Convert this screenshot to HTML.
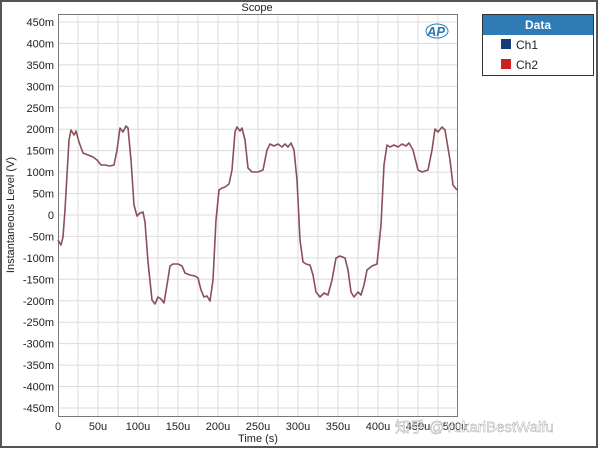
<!DOCTYPE html>
<html><head><meta charset="utf-8"><style>
body{margin:0;background:#fff;width:600px;height:450px;overflow:hidden;font-family:"Liberation Sans","Noto Sans CJK SC",sans-serif}
</style></head><body>
<svg width="600" height="450" xmlns="http://www.w3.org/2000/svg" style="position:absolute;left:0;top:0">
<rect x="1" y="1" width="596" height="446" fill="#fff" stroke="#555" stroke-width="2"/>
<text x="257" y="11" font-size="11" text-anchor="middle" fill="#222" font-family="Liberation Sans">Scope</text>
<g stroke="#dcdcdc" stroke-width="1">
<line x1="78" y1="15" x2="78" y2="416"/><line x1="98" y1="15" x2="98" y2="416"/><line x1="118" y1="15" x2="118" y2="416"/><line x1="138" y1="15" x2="138" y2="416"/><line x1="158" y1="15" x2="158" y2="416"/><line x1="178" y1="15" x2="178" y2="416"/><line x1="198" y1="15" x2="198" y2="416"/><line x1="218" y1="15" x2="218" y2="416"/><line x1="238" y1="15" x2="238" y2="416"/><line x1="258" y1="15" x2="258" y2="416"/><line x1="278" y1="15" x2="278" y2="416"/><line x1="298" y1="15" x2="298" y2="416"/><line x1="318" y1="15" x2="318" y2="416"/><line x1="338" y1="15" x2="338" y2="416"/><line x1="358" y1="15" x2="358" y2="416"/><line x1="378" y1="15" x2="378" y2="416"/><line x1="398" y1="15" x2="398" y2="416"/><line x1="418" y1="15" x2="418" y2="416"/><line x1="438" y1="15" x2="438" y2="416"/>
<line x1="58" y1="22" x2="457" y2="22"/><line x1="58" y1="43.4" x2="457" y2="43.4"/><line x1="58" y1="64.9" x2="457" y2="64.9"/><line x1="58" y1="86.3" x2="457" y2="86.3"/><line x1="58" y1="107.8" x2="457" y2="107.8"/><line x1="58" y1="129.2" x2="457" y2="129.2"/><line x1="58" y1="150.6" x2="457" y2="150.6"/><line x1="58" y1="172.1" x2="457" y2="172.1"/><line x1="58" y1="193.5" x2="457" y2="193.5"/><line x1="58" y1="215" x2="457" y2="215"/><line x1="58" y1="236.4" x2="457" y2="236.4"/><line x1="58" y1="257.9" x2="457" y2="257.9"/><line x1="58" y1="279.3" x2="457" y2="279.3"/><line x1="58" y1="300.8" x2="457" y2="300.8"/><line x1="58" y1="322.2" x2="457" y2="322.2"/><line x1="58" y1="343.6" x2="457" y2="343.6"/><line x1="58" y1="365.1" x2="457" y2="365.1"/><line x1="58" y1="386.5" x2="457" y2="386.5"/><line x1="58" y1="408" x2="457" y2="408"/>
</g>
<rect x="58.5" y="14.5" width="399" height="402" fill="none" stroke="#777"/>
<g font-size="11" fill="#222" text-anchor="end" font-family="Liberation Sans">
<text x="54" y="26">450m</text><text x="54" y="47.4">400m</text><text x="54" y="68.9">350m</text><text x="54" y="90.3">300m</text><text x="54" y="111.8">250m</text><text x="54" y="133.2">200m</text><text x="54" y="154.6">150m</text><text x="54" y="176.1">100m</text><text x="54" y="197.5">50m</text><text x="54" y="219">0</text><text x="54" y="240.4">-50m</text><text x="54" y="261.9">-100m</text><text x="54" y="283.3">-150m</text><text x="54" y="304.8">-200m</text><text x="54" y="326.2">-250m</text><text x="54" y="347.6">-300m</text><text x="54" y="369.1">-350m</text><text x="54" y="390.5">-400m</text><text x="54" y="412">-450m</text>
</g>
<g font-size="11" fill="#222" text-anchor="middle" font-family="Liberation Sans">
<text x="58" y="430">0</text><text x="98" y="430">50u</text><text x="138" y="430">100u</text><text x="178" y="430">150u</text><text x="218" y="430">200u</text><text x="258" y="430">250u</text><text x="298" y="430">300u</text><text x="338" y="430">350u</text><text x="378" y="430">400u</text><text x="418" y="430">450u</text><text x="455" y="430">500u</text>
<text x="258" y="442">Time (s)</text>
</g>
<text transform="translate(14,215) rotate(-90)" font-size="11" fill="#222" text-anchor="middle" font-family="Liberation Sans">Instantaneous Level (V)</text>
<text x="436" y="36" font-size="13" font-style="italic" font-weight="bold" fill="#2a7ab8" text-anchor="middle" font-family="Liberation Sans">AP</text>
<ellipse cx="437" cy="31" rx="11" ry="7" fill="none" stroke="#2a7ab8" stroke-width="1"/>
<polyline fill="none" stroke="#8a4f5a" stroke-width="1.6" stroke-linejoin="round" points="58,240 61,245 63,237 65,210 67,175 69,140 71,130 74,135 76,131 79,142 83,153 88,155 93,157 97,160 101,165 105,165 110,166 114,165 117,150 120,128 123,132 126,126 128,128 131,160 134,205 137,216 140,213 143,212 145,222 148,262 152,300 155,304 158,297 161,299 164,303 167,285 170,266 173,264 178,264 182,266 185,273 190,275 195,276 198,278 201,290 204,297 207,296 210,301 213,280 216,220 219,190 222,188 225,187 229,184 232,170 235,132 237,127 240,131 242,128 245,140 248,168 252,172 258,172 263,170 267,150 270,144 274,146 278,144 282,147 285,144 288,147 291,143 294,150 297,180 300,240 303,262 306,264 310,265 313,275 316,292 320,297 324,293 328,295 332,280 336,258 340,256 345,258 348,270 351,292 354,297 358,292 361,295 364,285 367,270 372,266 377,264 381,225 384,165 387,145 390,147 394,145 398,147 402,144 406,146 409,143 413,150 418,170 422,172 428,170 432,150 435,129 438,132 442,127 445,130 450,160 453,185 457,190"/>
<rect x="482.5" y="14.5" width="111" height="61" fill="#fff" stroke="#333"/>
<rect x="483" y="15" width="110" height="20" fill="#2e7bb5"/>
<text x="538" y="29" font-size="12" font-weight="bold" fill="#fff" text-anchor="middle" font-family="Liberation Sans">Data</text>
<rect x="501" y="39" width="10" height="10" fill="#173c7a"/>
<rect x="501" y="59" width="10" height="10" fill="#c8211f"/>
<text x="516" y="49" font-size="12" fill="#222" font-family="Liberation Sans">Ch1</text>
<text x="516" y="69" font-size="12" fill="#222" font-family="Liberation Sans">Ch2</text>
<text x="395" y="432" font-size="15" fill="#fff" fill-opacity="0.8" stroke="#999" stroke-width="0.4" font-family="Liberation Sans, Noto Sans CJK SC, sans-serif">知乎 @YukariBestWaifu</text>
</svg>
</body></html>
